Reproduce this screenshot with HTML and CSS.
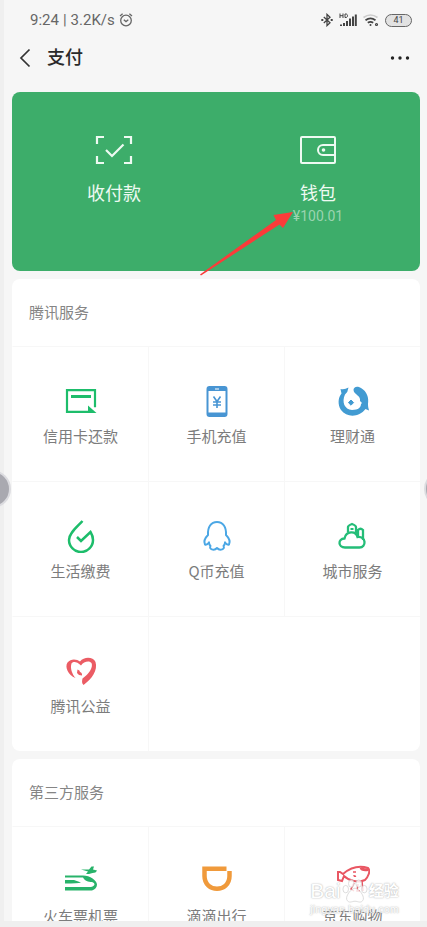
FILE: index.html
```html
<!DOCTYPE html>
<html lang="zh-CN">
<head>
<meta charset="utf-8">
<meta name="viewport" content="width=device-width, initial-scale=1">
<title>支付</title>
<link rel="stylesheet" href="styles.css">
</head>
<body>
<div class="app">
<div class="screen">
  <div class="status">
    <span>9:24</span><span>|</span><span>3.2K/s</span>
    <svg class="alarm" width="14" height="14" viewBox="0 0 14 14" fill="none" stroke="#666" stroke-width="1.3"><circle cx="7" cy="7.5" r="5.3"/><path d="M1 3 3.6.8M13 3 10.4.8M4.8 6.8 7 8.6l2.3-1.8"/></svg>
    <div class="status-right">
      <svg width="12" height="14" viewBox="0 0 12 14" fill="none" stroke="#444" stroke-width="1.3"><path d="M2.8 4 9 9.7 6 12.6V1.4L9 4.3 2.8 10"/><path d="M.3 7h2M9.7 7h2" stroke-width="1.8"/></svg>
      <svg width="18" height="14" viewBox="0 0 18 14" fill="none" stroke="#444"><path d="M1 .5v4.500M4 .5v4.500M1 2.700h3M6 1v3.500h1c2 0 2-3.500 0-3.500z"/><path d="M2 13v-1.500M5 13v-3M8 13V8M11 13V5.500M14 13V3.500M16.800 13V1.500" stroke-width="2"/></svg>
      <svg width="16" height="14" viewBox="0 0 16 14" fill="none" stroke="#444" stroke-width="1.700"><path d="M.5 4.500q7-5 14 0" stroke="#ccc"/><path d="M2.500 7.200q5-3.700 10 0M4.800 9.800q2.700-2 5.400 0"/><circle cx="7.500" cy="12" r="1" fill="#444" stroke="none"/><circle cx="13.500" cy="11.500" r="1" stroke-width="1.200"/></svg>
      <span class="battery">41</span>
    </div>
  </div>
  <header class="nav">
    <button class="icon-button" aria-label="返回"><svg width="12" height="20" viewBox="0 0 12 20" fill="none" stroke="#333" stroke-width="1.700"><path d="M10.500 1.500 2 10l8.500 8.500"/></svg></button>
    <h1>支付</h1>
    <button class="icon-button more" aria-label="更多"><svg width="20" height="6" viewBox="0 0 20 6" fill="#222"><circle cx="2.500" cy="3" r="1.700"/><circle cx="10" cy="3" r="1.700"/><circle cx="17.500" cy="3" r="1.700"/></svg></button>
  </header>
  <main>
    <section class="hero">
      <a class="hero-item" href="#">
        <svg width="38" height="30" viewBox="0 0 38 30" fill="none" stroke="#eefaf2" stroke-width="2.200"><path d="M2 9V2h7M29 2h7v7M36 21v7h-7M9 28H2v-7"/><path d="m11 15 6 6 11.500-11.500"/></svg>
        <span>收付款</span>
      </a>
      <a class="hero-item" href="#">
        <svg width="38" height="30" viewBox="0 0 38 30" fill="none" stroke="#eefaf2" stroke-width="2"><rect x="2" y="2" width="34" height="26" rx="1"/><path d="M36 10H24a5 5 0 0 0 0 10h12"/><circle cx="24.500" cy="15" r="1.800" fill="#eefaf2" stroke="none"/></svg>
        <span>钱包</span>
        <small>¥100.01</small>
      </a>
      <svg class="arrow" width="94" height="64" viewBox="0 0 94 64"><path d="M0 62.500 76 8l-2.500-5L93 0 83 16l-3.500-3.500L1 63.500Z" fill="#fb3b39"/></svg>
    </section>

    <section class="card">
      <h2>腾讯服务</h2>
      <div class="grid grid-open">
        <a class="cell" href="#"><svg width="34" height="34" viewBox="0 0 34 34" fill="none" stroke="#1dbd6b" stroke-width="2.200"><path d="M26 27.800H3V6.200h28v17"/><path d="M7 12.500h20" stroke-width="3"/><path d="M24 21.500v7.400h8.500Z" fill="#1dbd6b" stroke="none"/></svg><span>信用卡还款</span></a>
        <a class="cell" href="#"><svg width="34" height="34" viewBox="0 0 34 34" fill="none" stroke="#4895d3" stroke-width="2"><rect x="7.500" y="3" width="19" height="29" rx="2"/><path d="M8 5h18" stroke-width="4"/><path d="M8 30h18" stroke-width="3"/><path d="M15 5h4" stroke="#fff" stroke-width="1.200"/><path d="m13.500 12.500 3.500 5 3.500-5M17 17.500v6.500M13 18h8M13 21h8" stroke-width="1.600"/></svg><span>手机充值</span></a>
        <a class="cell" href="#"><svg width="34" height="34" viewBox="0 0 34 34" fill="#429bd2"><path d="M4.500 5q4 1 8-1.500Q12 8 9 10.500C5.500 18 8.500 25.500 16 26c6.500 0 9-3 9-6l1-1-2-2c1-6-6-6-6.500-11C17.500 3 21 1.500 25 4c6 3.500 8 9.500 7 16 0 3 .5 4 1 6.500L29.500 25C23 33.500 11 34 5 26 1.500 20.500 2 13.500 5.500 9.500Z"/><path d="m15 16 2.600 2.600-2.600 2.600-2.600-2.600Z" stroke="#429bd2"/></svg><span>理财通</span></a>
        <a class="cell" href="#"><svg width="34" height="34" viewBox="0 0 34 34" fill="none" stroke="#1dbd6b" stroke-width="2.500"><path d="M18.500 2C13 8 5 14 5 21a12 12 0 0 0 24 0q0-4-2.500-8L17 22l-4-4"/></svg><span>生活缴费</span></a>
        <a class="cell" href="#"><svg width="34" height="34" viewBox="0 0 34 34" fill="none" stroke="#4ba7e5" stroke-width="2" stroke-linejoin="round" stroke-linecap="round"><path d="M9 23.500c-1.500 2-2.500 2.500-4 2-1.500-3 .5-7 3-9.500C7.500 8 11 3 17 3s9.500 5 9 13c2.500 2.500 4.500 6.500 3 9.500-1.500.5-2.500 0-4-2"/><path d="M9 23.500q0 2 1.500 3.500c-2 3 3.500 5.500 6.500 2 3 3.500 8.500 1 6.500-2q1.500-1.500 1.500-3.500"/></svg><span>Q币充值</span></a>
        <a class="cell" href="#"><svg width="34" height="34" viewBox="0 0 34 34" fill="none" stroke="#24bd78" stroke-width="2.300"><path d="M9 28.500c-7 0-7.500-8.500-.5-9C10 11.500 20 11.500 21.500 18c9-1 9 10.500 2 10.500Z"/><path d="M12 13.500V8q0-1.500 4-3 4 1.500 4 3v7.500M22 17v-6q2.500-2.500 5 0v10"/><path d="M14.500 10h3" stroke-width="2"/></svg><span>城市服务</span></a>
        <a class="cell" href="#"><svg width="34" height="34" viewBox="0 0 34 34" fill="#eb5c64"><path d="M11.500 24C4 21 .5 13 3.500 8.500 7 4 13 5 16 7.500c4-5 13-5 15.500.5C34 16 28 25 19.500 31c-2-2-1.500-4-1-6.500 6-4 11-11 9-15.500-2-3-8-1.500-10.500 2.500C13 7.500 9 7 7.500 9.500 6 14 8 20 11.500 24Z"/><path d="M13.500 15.500q2.500.5 2.500 2.500 2.500 1 2 3.500-3.500 0-5-2.500Z"/></svg><span>腾讯公益</span></a>
      </div>
    </section>

    <section class="card">
      <h2>第三方服务</h2>
      <div class="grid">
        <a class="cell" href="#"><svg width="34" height="34" viewBox="0 0 34 34" fill="#28b36a"><path d="M17 5.500h8l2.500-3H30l-1 3 4 1q-1 2.500-4.500 2.500L25 10h-3l2-2.500ZM1 11.500h18c7 0 14 5 14 9 0 3-2 5-5 6H1v-3.500h26c5-1.500 4-4 1-5-4 0-7-1-9-4.500H1ZM1 16h9l7 2.500q-3 1-16 1Z"/></svg><span>火车票机票</span></a>
        <a class="cell" href="#"><svg width="34" height="34" viewBox="0 0 34 34" fill="none" stroke="#f09a3b" stroke-width="4.500"><path d="M26.500 4.800H4.500V12c0 17 25 17 25 0V7"/></svg><span>滴滴出行</span></a>
        <a class="cell" href="#"><svg width="34" height="34" viewBox="0 0 34 34" fill="none" stroke="#e95763" stroke-width="2"><path d="M7 10c7-6 15-9 25-6 3 3 0 9-3 12-7 3-16 1-21-4l-2 5-4-1L2 8h2Z"/><path d="M25 3.500q1 3 7 2" stroke-width="3"/><path d="M17 8h3M18 11q0 2 2 1M18 19l-3 6 3 2M22 20l-1 7h3M26 17l1 10" stroke-width="1.500"/></svg><span>京东购物</span></a>
      </div>
    </section>
  </main>
  <div class="watermark">
    <div class="brand"><span>Bai</span><svg width="26" height="26" viewBox="0 0 28 26" fill="#fff" stroke="#ccc" stroke-width=".9"><ellipse cx="4" cy="11" rx="3" ry="4"/><ellipse cx="10" cy="5" rx="3" ry="4"/><ellipse cx="18" cy="5" rx="3" ry="4"/><ellipse cx="24" cy="11" rx="3" ry="4"/><path d="M14 10c4 0 10 8 9 12-2 5-6 2-9 2s-7 3-9-2c-1-4 5-12 9-12Z"/></svg><span class="brand-cn">经验</span></div>
    <div class="domain">jingyan.baidu.com</div>
  </div>
</div>
<span class="knob knob-left"></span>
<span class="knob knob-right"></span>
</div>
</body>
</html>
```
FILE: styles.css
```css
* { box-sizing: border-box; }
body { margin: 0; }
.app {
  height: 100vh;
  padding: 0 0 6px 4px;
  position: relative;
  overflow: hidden;
  background: #efefef;
  font-family: Roboto, "Noto Sans CJK SC", sans-serif;
  color: #7c7c7c;
}
a { color: inherit; text-decoration: none; }
svg { display: block; flex: none; }
.screen {
  position: relative;
  height: 100%;
  overflow: hidden;
  background: #f6f6f6;
}
.status {
  display: flex;
  align-items: center;
  gap: 4px;
  height: 40px;
  padding: 0 15px 0 26px;
  font-size: 15px;
  color: #666;
}
.status-right {
  display: flex;
  align-items: center;
  gap: 6px;
  margin-left: auto;
}
.battery {
  width: 27px;
  height: 13px;
  border: 1px solid #666;
  border-radius: 7px;
  background: #e2e2e2;
  color: #444;
  font-size: 9px;
  line-height: 11px;
  text-align: center;
}
.nav {
  display: flex;
  align-items: center;
  gap: 16px;
  height: 36px;
  padding: 0 17px 0 15px;
}
.nav h1 {
  margin: 0;
  font-size: 18px;
  line-height: 24px;
  font-weight: 500;
  color: #2a2a2a;
}
.icon-button {
  padding: 0;
  border: 0;
  background: none;
}
.more { margin-left: auto; }
main {
  display: flex;
  flex-direction: column;
  gap: 8px;
  padding: 16px 7px 0 8px;
}
.hero {
  position: relative;
  display: grid;
  grid-template-columns: 1fr 1fr;
  height: 179px;
  border-radius: 8px;
  background: #3dad6a;
  color: #eefaf2;
}
.hero-item {
  display: flex;
  flex-direction: column;
  align-items: center;
  padding-top: 43px;
  font-size: 18px;
  line-height: 24px;
}
.hero-item span { margin-top: 17px; }
.hero-item small {
  font-size: 14px;
  line-height: 20px;
  color: #9bd4b0;
}
.arrow {
  position: absolute;
  left: 46%;
  top: 120px;
}
.card {
  border-radius: 8px;
  background: #fff;
  overflow: hidden;
}
.card h2 {
  margin: 0;
  padding: 0 17px;
  font-size: 15px;
  line-height: 68px;
  font-weight: 400;
  height: 67px;
  color: #858585;
}
.grid {
  display: grid;
  grid-template-columns: repeat(3, 1fr);
  grid-auto-rows: 135px;
}
.grid-open::after {
  content: "";
  grid-column: span 2;
  border-top: 1px solid #f7f7f7;
  border-left: 1px solid #f7f7f7;
}
.cell {
  display: flex;
  flex-direction: column;
  align-items: center;
  gap: 7px;
  padding-top: 37px;
  border-top: 1px solid #f7f7f7;
  border-left: 1px solid #f7f7f7;
  font-family: "Noto Sans CJK SC", sans-serif;
  font-size: 15px;
  line-height: 22px;
}
.cell:nth-child(3n + 1) { border-left-color: transparent; }
.watermark {
  position: absolute;
  right: 28px;
  bottom: 6px;
  color: #fff;
  text-shadow: 0 0 1px #aaa, 0 0 2px #bbb;
  opacity: .8;
}
.brand {
  display: flex;
  align-items: center;
  gap: 1px;
  height: 24px;
  font: 21px/24px "Liberation Sans", "Noto Sans CJK SC", sans-serif;
}
.brand-cn { font-size: 15px; font-weight: 700; }
.domain {
  font: 11px/12px "Liberation Sans", sans-serif;
}
.knob {
  position: absolute;
  top: 470px;
  width: 38px;
  height: 38px;
  border: 2px solid #dcdce0;
  border-radius: 50%;
  background: #a9a9b0;
}
.knob-left { left: -27px; }
.knob-right { right: -35px; }
```
